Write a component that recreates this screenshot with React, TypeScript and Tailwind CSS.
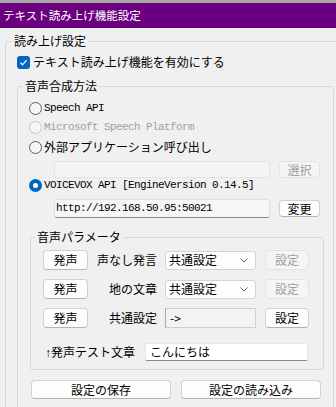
import React, { useState } from "react";

const jp = "font-['Noto_Sans_CJK_JP',sans-serif]";
const mono = "font-['Liberation_Mono','Noto_Sans_CJK_JP',monospace] text-[11px] tracking-[-0.6px]";

const Radio = ({ checked, disabled }: { checked?: boolean; disabled?: boolean }) => {
  if (checked) {
    return (
      <span className="flex w-[13px] h-[13px] rounded-full bg-[#0067c0] items-center justify-center shrink-0">
        <span className="w-[5px] h-[5px] rounded-full bg-white" />
      </span>
    );
  }
  return (
    <span
      className={
        disabled
          ? "w-[13px] h-[13px] rounded-full border border-[#c6c6c6] bg-[#f5f5f5] shrink-0"
          : "w-[13px] h-[13px] rounded-full border border-[#5c5c5c] bg-[#f5f5f5] shrink-0"
      }
    />
  );
};

const Button = ({ label, disabled, className }: { label: string; disabled?: boolean; className?: string }) => (
  <button
    className={
      (disabled
        ? "bg-[#f5f5f5] border border-[#e3e3e3] text-[#a0a0a0] "
        : "bg-[#fdfdfd] border border-[#d0d0d0] border-b-[#b4b4b4] text-black ") +
      "rounded-[4px] text-[12px] leading-none flex items-center justify-center " +
      (className || "")
    }
  >
    {label}
  </button>
);

const Combo = ({ value }: { value: string }) => (
  <div className="w-[91px] h-[19px] bg-[#fdfdfd] border border-[#d3d3d3] rounded-[3px] flex items-center pl-[3px] pr-[7px] text-[12px]">
    <span className="flex-1">{value}</span>
    <svg width="8" height="5" viewBox="0 0 8 5">
      <path d="M0.5 0.5 L4 4 L7.5 0.5" fill="none" stroke="#606060" strokeWidth="1" />
    </svg>
  </div>
);

const ParamRow = ({
  label,
  children,
  first,
  last,
}: {
  label: string;
  children: React.ReactNode;
  first?: boolean;
  last?: boolean;
}) => (
  <div className={first ? "flex items-center h-[20px] mt-[5px]" : "flex items-center h-[20px] mt-[9px]"}>
    <Button label="発声" className="ml-[12px] w-[45px] h-[20px]" />
    <span className="w-[69px] text-right text-[12px] leading-none">{label}</span>
    <div className="ml-[8px]">{children}</div>
    <Button label="設定" disabled={!last} className="ml-[9px] w-[44px] h-[20px]" />
  </div>
);

export default function App() {
  const [text, setText] = useState("こんにちは");
  return (
    <div className={"w-[336px] h-[407px] overflow-hidden bg-[#f0f0f0] text-black " + jp}>
      <div className="h-[3px] bg-[#a9a9a3]" />
      <div className="h-[25px] bg-[#6a0080] text-white text-[11.5px] pl-[3px] flex items-center">
        テキスト読み上げ機能設定
      </div>

      <fieldset className="mt-[5px] ml-[5px] w-[345px] border border-[#d8d8d8] rounded-[3px] pb-[30px]">
        <legend className="ml-[6px] px-[2px] text-[12px] leading-[16px]">読み上げ設定</legend>

        <div className="flex items-center h-[16px] mt-[5px] ml-[11px]">
          <span className="w-[13px] h-[13px] rounded-[3px] bg-[#0067c0] flex items-center justify-center">
            <svg width="9" height="9" viewBox="0 0 9 9">
              <path d="M1.5 4.8 L3.6 6.8 L7.6 2.2" fill="none" stroke="white" strokeWidth="1.2" />
            </svg>
          </span>
          <span className="ml-[3px] text-[12px] leading-none">テキスト読み上げ機能を有効にする</span>
        </div>

        <fieldset className="mt-[8px] ml-[11px] w-[317px] border border-[#d8d8d8] rounded-[3px] pb-[30px]">
          <legend className="ml-[5px] px-[2px] text-[12px] leading-[16px]">音声合成方法</legend>

          <div className="flex items-center h-[20px] mt-[4px] ml-[11px]">
            <Radio />
            <span className={"ml-[2px] " + mono}>Speech API</span>
          </div>
          <div className="flex items-center h-[19px] ml-[11px]">
            <Radio disabled />
            <span className={"ml-[2px] text-[#a0a0a0] " + mono}>Microsoft Speech Platform</span>
          </div>
          <div className="flex items-center h-[20px] ml-[11px]">
            <Radio />
            <span className="ml-[2px] text-[12px] leading-none">外部アプリケーション呼び出し</span>
          </div>

          <div className="flex items-start mt-[4px] ml-[36px]">
            <div className="w-[216px] h-[17px] bg-[#f5f5f5] border border-[#e3e3e3] rounded-[3px]" />
            <Button label="選択" disabled className="ml-[9px] w-[41px] h-[17px]" />
          </div>

          <div className="flex items-center h-[15px] ml-[11px]">
            <Radio checked />
            <span className={"ml-[2px] " + mono}>VOICEVOX API [EngineVersion 0.14.5]</span>
          </div>

          <div className="flex items-start mt-[6px] ml-[36px]">
            <div
              className={
                "w-[216px] h-[19px] bg-[#f6f6f6] border border-[#e0e0e0] border-b-[#8a8a8a] rounded-[3px] flex items-center pl-[1px] " +
                mono
              }
            >
              http://192.168.50.95:50021
            </div>
            <Button label="変更" className="ml-[9px] mt-[1px] w-[41px] h-[17px]" />
          </div>

          <fieldset className="mt-[11px] ml-[12px] w-[294px] border border-[#d8d8d8] rounded-[3px] pb-[8px]">
            <legend className="ml-[4px] px-[2px] text-[12px] leading-[16px]">音声パラメータ</legend>

            <ParamRow label="声なし発言" first>
              <Combo value="共通設定" />
            </ParamRow>
            <ParamRow label="地の文章">
              <Combo value="共通設定" />
            </ParamRow>
            <ParamRow label="共通設定" last>
              <div className="w-[91px] h-[20px] bg-[#f3f3f3] border border-[#cfcfcf] border-l-[#a8a8a8] flex items-center pl-[4px] text-[12px]">
                -&gt;
              </div>
            </ParamRow>

            <div className="flex items-center h-[18px] mt-[15px]">
              <span className="ml-[14px] text-[12px] leading-none">
                <span className="font-['Liberation_Sans',sans-serif] text-[12px]">↑</span>発声テスト文章
              </span>
              <input
                value={text}
                onChange={(e) => setText(e.target.value)}
                className="ml-[10px] w-[163px] h-[18px] bg-white border border-[#e6e6e6] border-b-[#8a8a8a] rounded-[2px] px-[4px] text-[12px] outline-none"
              />
            </div>
          </fieldset>

          <div className="flex mt-[10px] ml-[13px] gap-[10px]">
            <Button label="設定の保存" className="w-[140px] h-[19px]" />
            <Button label="設定の読み込み" className="w-[140px] h-[19px]" />
          </div>
        </fieldset>
      </fieldset>
    </div>
  );
}
